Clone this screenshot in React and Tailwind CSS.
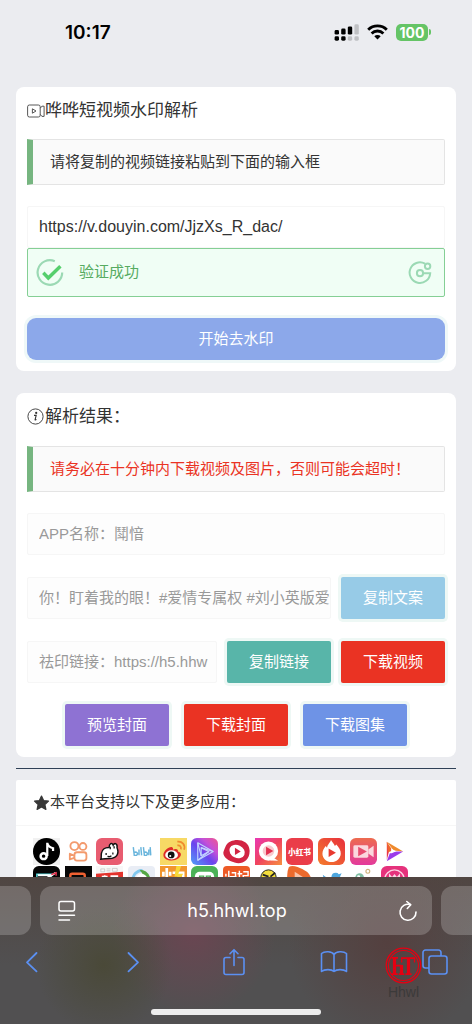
import { useState } from 'react';

const btnBase =
  'h-[42px] rounded-[2px] text-[15px] text-white whitespace-nowrap ring-[3px] ring-[#eef8f5]';

const fieldBase =
  'h-[42px] min-w-0 rounded-[2px] border border-[#f6f6f6] px-[11px] outline-none';

function StatusBar() {
  return (
    <header className="flex h-[87px] shrink-0 items-start justify-between pr-[41px] pl-[65px] pt-[20px]">
      <span className="font-['Inter','Liberation_Sans',sans-serif] text-[19px] leading-[26px] font-semibold text-black">10:17</span>
      <div className="flex h-[24px] items-center gap-[8px]">
        <svg width="25" height="17" viewBox="0 0 25 17" aria-label="Signal">
          <g fill="#000">
            <rect x="0.6" y="6" width="4.4" height="4.6" rx="1.4" />
            <rect x="7.2" y="4.6" width="4.4" height="6" rx="1.4" />
            <rect x="13.8" y="2.4" width="4.4" height="8.2" rx="1.4" />
            <rect x="0.6" y="12.3" width="4.4" height="4.4" rx="1.4" />
            <rect x="7.2" y="12.3" width="4.4" height="4.4" rx="1.4" />
          </g>
          <g fill="#bfc0c3">
            <rect x="20.4" y="0.3" width="4.4" height="10.3" rx="1.4" />
            <rect x="13.8" y="12.3" width="4.4" height="4.4" rx="1.4" />
            <rect x="20.4" y="12.3" width="4.4" height="4.4" rx="1.4" />
          </g>
        </svg>
        <svg width="21" height="16" viewBox="0 0 21 16" aria-label="Wi-Fi">
          <path d="M10.5 15.6 13.7 12.3a4.6 4.6 0 0 0-6.4 0z" fill="#000" />
          <path d="M4.6 9.4a8.4 8.4 0 0 1 11.8 0" fill="none" stroke="#000" strokeWidth="2.8" />
          <path d="M1.2 5.7a13.3 13.3 0 0 1 18.6 0" fill="none" stroke="#000" strokeWidth="2.9" />
        </svg>
        <div className="flex items-center gap-px">
          <span className="flex h-[17px] w-[32px] items-center justify-center rounded-[5px] bg-[#65c466] font-['Inter','Liberation_Sans',sans-serif] text-[14px] font-bold text-white">100</span>
          <span className="h-[6px] w-[2px] rounded-r-full bg-[#65c466]" />
        </div>
      </div>
    </header>
  );
}

function Notice({ children, danger }) {
  return (
    <p className={`flex h-[46px] items-center rounded-r-[2px] border border-l-[6px] border-[#e4e4e4] border-l-[#76b580] bg-[#fafafa] pl-[17px] text-[15px] ${danger ? 'text-[#ea3323]' : 'text-[#333333]'}`}>
      {children}
    </p>
  );
}

function ParseCard() {
  const [link, setLink] = useState('https://v.douyin.com/JjzXs_R_dac/');

  return (
    <section className="flex flex-col rounded-[8px] bg-white px-[11px] pt-[11px] pb-[11px]">
      <h1 className="mb-[16px] flex h-[25px] items-center text-[17px] text-[#333333]">
        <svg width="18" height="14" viewBox="0 0 18 14" fill="none" stroke="#444" strokeWidth="0.9" className="shrink-0">
          <rect x="0.6" y="1" width="12.6" height="12" rx="1.8" />
          <path d="M5.4 4.8v4.4L9 7z" />
          <path d="M13.3 4.2l1.6-2h2.2v10.2h-2.2l-1.6-2" />
        </svg>
        哗哗短视频水印解析
      </h1>
      <Notice>请将复制的视频链接粘贴到下面的输入框</Notice>
      <input
        aria-label="视频链接"
        value={link}
        onChange={(event) => setLink(event.target.value)}
        className={`${fieldBase} mt-[21px] text-[16px] text-[#333333]`}
      />
      <div className="flex h-[49px] items-center justify-between rounded-[2px] border border-[#85cf95] bg-[#f0fef5] pr-[12px] pl-[8px] text-[15px] text-[#56ab61]">
        <span className="flex items-center gap-[15px]">
          <svg width="28" height="28" viewBox="0 0 28 28" fill="none">
            <path d="M18.8 2.2A12.3 12.3 0 1 0 26.2 13.4" stroke="#9bd9b4" strokeWidth="2.2" />
            <path d="M7.3 13.8l5 5.2L24.4 7.2" stroke="#56cf6d" strokeWidth="3.4" />
          </svg>
          验证成功
        </span>
        <svg width="24" height="24" viewBox="0 0 24 24" fill="none" stroke="#9bd9b4" strokeWidth="2">
          <path d="M17 2.7A10.3 10.3 0 1 0 22.2 12.2H15" />
          <circle cx="12" cy="12.2" r="3.1" />
          <circle cx="19.6" cy="5.2" r="2.7" />
        </svg>
      </div>
      <button type="button" className="mt-[21px] h-[42px] rounded-[9px] bg-[#8ca8ea] text-[15px] text-white ring-[3px] ring-[#eff8f8]">
        开始去水印
      </button>
    </section>
  );
}

function ResultCard() {
  const mutedField = `${fieldBase} bg-[#fdfdfd] pb-[4px] text-[15px] text-[#999999]`;

  return (
    <section className="mt-[22px] flex flex-col rounded-[8px] bg-white px-[11px] pt-[11px] pb-[11px]">
      <h2 className="mb-[17px] flex h-[25px] items-center gap-px text-[17px] text-[#333333]">
        <svg width="17" height="17" viewBox="0 0 17 17" className="shrink-0">
          <circle cx="8.5" cy="8.5" r="7.6" fill="none" stroke="#333" strokeWidth="0.9" />
          <circle cx="9.2" cy="4.9" r="1.1" fill="#333" />
          <path d="M7 7.4h2.2l-1.1 4.3c-.1.5.5.3 1.3-.3" fill="none" stroke="#333" strokeWidth="1.1" />
        </svg>
        解析结果：
      </h2>
      <Notice danger>请务必在十分钟内下载视频及图片，否则可能会超时！</Notice>
      <input aria-label="APP名称" readOnly value="APP名称：鬦愔" className={`${mutedField} mt-[21px]`} />
      <div className="mt-[22px] flex gap-[10px]">
        <input aria-label="文案" readOnly value="你！盯着我的眼！#爱情专属权 #刘小英版爱情专属权" className={`${mutedField} flex-1 pr-0`} />
        <button type="button" className={`${btnBase} w-[104px] bg-[#97cbe7]`}>复制文案</button>
      </div>
      <div className="mt-[22px] flex gap-[10px]">
        <input aria-label="祛印链接" readOnly value="祛印链接：https://h5.hhw" className={`${mutedField} flex-1 pr-0`} />
        <button type="button" className={`${btnBase} w-[104px] bg-[#58b5a9]`}>复制链接</button>
        <button type="button" className={`${btnBase} w-[104px] bg-[#ea3323]`}>下载视频</button>
      </div>
      <div className="mt-[21px] flex justify-center gap-[15px]">
        <button type="button" className={`${btnBase} w-[104px] bg-[#8e72d3]`}>预览封面</button>
        <button type="button" className={`${btnBase} w-[104px] bg-[#ea3323]`}>下载封面</button>
        <button type="button" className={`${btnBase} w-[104px] bg-[#6e93e6]`}>下载图集</button>
      </div>
    </section>
  );
}

// Each entry is drawn on a 28x28 canvas.
const APP_ICONS = [
  {
    name: '抖音',
    art: (
      <>
        <rect width="28" height="28" fill="#f1f1f1" />
        <circle cx="14" cy="14" r="14" fill="#000" />
        <circle cx="11" cy="18.8" r="3.1" fill="none" stroke="#fff" strokeWidth="2.6" />
        <path d="M14.8 18.6V5c.6 4 3 4.8 6 5.6v3" fill="none" stroke="#fff" strokeWidth="2.3" />
      </>
    ),
  },
  {
    name: '快手',
    art: (
      <g fill="none" stroke="#f39a6d" strokeWidth="1.9">
        <circle cx="9.8" cy="8.4" r="4.2" />
        <circle cx="18.6" cy="8.8" r="3.6" />
        <rect x="9.8" y="14.8" width="12.4" height="8.6" rx="2.6" />
        <path d="M9.6 18.2l-4.6-1.8v5.8l4.6-1.6" strokeLinejoin="round" />
      </g>
    ),
  },
  {
    name: '皮皮虾',
    art: (
      <>
        <rect width="28" height="28" rx="6" fill="#e85c70" />
        <path d="M5 22c.8-2 .2-3 .6-6 .6-4 4-6.4 8-6.2 0-4 3-5.6 4.2-2.4 1.4-3 4.8-1.6 4 2.8 2.6 6-.4 11-7.8 11-3 0-6 .8-9 .8z" fill="#fff" stroke="#111" strokeWidth="1.5" />
        <path d="M14.8 9v2.6M18.8 8.6V11M10.5 15.6v2M17.5 15v2M12 18.6q2 1.6 4-.2" stroke="#111" strokeWidth="1.3" fill="none" />
      </>
    ),
  },
  {
    name: '哔哩哔哩',
    art: (
      <g fill="none" stroke="#69b5dc" strokeWidth="1.5">
        <path d="M5.5 9.5l1 8.5h2.5q2-2.2-.6-3.4l-2 .2M11.4 12v6M13.3 9.5l.8 8.5M16 9.5l1 8.5h2.3q1.9-2.2-.6-3.4l-2 .2M21.6 12v6M23 9.5l.6 8.5" />
      </g>
    ),
  },
  {
    name: '微博',
    art: (
      <>
        <rect width="28" height="28" fill="#f7d965" />
        <path d="M3.5 17.5c0-4 6-9 9-8 1.5.5 1 2 .8 2.6 3-1.4 6.2-.8 5.2 2 4.5 1 4 4.8.5 7.2-5 3.6-15.5 2.2-15.5-3.8z" fill="#df2c28" />
        <ellipse cx="12" cy="17.5" rx="6.6" ry="4.7" fill="#fff" />
        <circle cx="11.6" cy="17.6" r="3.5" fill="#111" />
        <circle cx="10.6" cy="18.6" r="1.1" fill="#fff" />
        <path d="M18 7.6c2.6-.4 4.4 1.6 3.6 4.2M18 3.8c5-.8 8.6 3.4 7 8.4" fill="none" stroke="#f08c2e" strokeWidth="1.8" />
      </>
    ),
  },
  {
    name: '微视',
    art: (
      <>
        <defs>
          <linearGradient id="weishi" x1="0" y1="1" x2="1" y2="0">
            <stop offset="0" stopColor="#4fa0f7" />
            <stop offset="0.45" stopColor="#6a45ee" />
            <stop offset="0.7" stopColor="#c450d8" />
            <stop offset="1" stopColor="#f0578d" />
          </linearGradient>
        </defs>
        <rect width="28" height="28" rx="6" fill="url(#weishi)" />
        <g fill="none" stroke="#c3d4ff" strokeWidth="1.2" strokeLinejoin="round">
          <path d="M7 5v18L23 14z" />
          <path d="M10.5 10v8.5L18.5 14z" />
          <path d="M7 5l3.5 13.5M23 14l-12.5-4M7 23l11.5-9" />
        </g>
      </>
    ),
  },
  {
    name: '全民小视频',
    art: (
      <>
        <path d="M3 8C7-.5 27-1 27.6 13c.4 11-9 15-15.6 12.4C5 24-1 19 .6 14c.6-2 1.4-4 2.4-6z" fill="#d22443" />
        <ellipse cx="14.6" cy="14" rx="8.3" ry="6.5" fill="#fff" transform="rotate(25 14.6 14)" />
        <path d="M12.4 10v7.6l6-3.6z" fill="#d22443" />
      </>
    ),
  },
  {
    name: '全民K歌',
    art: (
      <>
        <defs>
          <linearGradient id="quanmin" x1="0" y1="0" x2="1" y2="1">
            <stop offset="0" stopColor="#e938b4" />
            <stop offset="0.5" stopColor="#f0435f" />
            <stop offset="1" stopColor="#f6903f" />
          </linearGradient>
        </defs>
        <rect width="28" height="28" fill="url(#quanmin)" />
        <circle cx="14" cy="13.5" r="10" fill="#fff" />
        <path d="M17 19l7 4.5-8-.2z" fill="#fff" />
        <circle cx="14" cy="13.5" r="6" fill="#f9c9cf" />
        <path d="M11.5 9v9l7.5-4.5z" fill="#e23050" />
      </>
    ),
  },
  {
    name: '小红书',
    art: (
      <>
        <rect width="28" height="28" rx="6" fill="#ea3d49" />
        <text x="14" y="17.5" textAnchor="middle" fontSize="8" fontWeight="900" fill="#fff">小红书</text>
      </>
    ),
  },
  {
    name: '火山',
    art: (
      <>
        <defs>
          <linearGradient id="huoshan" x1="0" y1="1" x2="1" y2="0">
            <stop offset="0" stopColor="#f47c2c" />
            <stop offset="1" stopColor="#e82f3d" />
          </linearGradient>
        </defs>
        <rect width="28" height="28" rx="6" fill="url(#huoshan)" />
        <path d="M13.5 2c1 2.5 3.4 3.6 4 6.4l1.5-1.6c2.8 3 4.8 6 4.6 9.6-.3 5-4.5 8.6-9.6 8.6S4.7 21.5 4.6 16.4c0-3.4 1.6-5.4 3.4-8l1.4 1.8C9.6 6.6 12.6 5 13.5 2z" fill="#fff" />
        <path d="M11 11v8.6l7.6-4.3z" fill="#e8392f" />
      </>
    ),
  },
  {
    name: '美拍',
    art: (
      <>
        <defs>
          <linearGradient id="meipai" x1="0" y1="0" x2="0" y2="1">
            <stop offset="0" stopColor="#ed6b4f" />
            <stop offset="1" stopColor="#e33a9c" />
          </linearGradient>
        </defs>
        <rect width="28" height="28" rx="6" fill="url(#meipai)" />
        <rect x="3.5" y="7.5" width="15.5" height="13" rx="1.5" fill="#fbd8de" />
        <path d="M19 12l5.5-4v12L19 16z" fill="#fbd8de" />
        <path d="M8.5 9v10l9-5z" fill="#e84c6e" />
      </>
    ),
  },
  {
    name: '西瓜视频',
    art: (
      <>
        <path d="M6 4l17 10-10-1z" fill="#ef8a2c" />
        <path d="M6 4l2.5 9L6 23z" fill="#e8304e" />
        <path d="M6 4l6 9-5 2z" fill="#ef642d" />
        <path d="M23 14L6 24l3-8 7-2z" fill="#9b3bea" />
        <path d="M10.5 11v5l4.5-2.5z" fill="#fff" />
      </>
    ),
  },
  {
    name: '剪映',
    art: (
      <>
        <rect width="28" height="28" rx="6" fill="#050505" />
        <path d="M4 8.5h15v13H4z" fill="none" stroke="#58dcdf" strokeWidth="1.5" />
        <path d="M5 9.5h14.5l4-2.5-18 11" fill="none" stroke="#fff" strokeWidth="2" />
        <path d="M19 9l5-2v3" fill="none" stroke="#e5304c" strokeWidth="1.5" />
      </>
    ),
  },
  {
    name: '快影',
    art: (
      <>
        <rect width="28" height="28" fill="#080808" />
        <rect x="5.5" y="8" width="15" height="14" rx="2" fill="none" stroke="#ef6132" strokeWidth="2.5" />
      </>
    ),
  },
  {
    name: '今日头条',
    art: (
      <>
        <rect width="28" height="28" fill="#f7f7f7" />
        <path d="M0 8l28-2v22H0z" fill="#e2332d" />
        <path d="M5 3h4v3H5zM11 3h4M11 5h4M17 2.5h5v3h-5z" fill="none" stroke="#c4c4c4" strokeWidth="0.8" />
        <path d="M6 11h6M9 9.5v4M15 10.5h8" stroke="#fff" strokeWidth="1.8" />
      </>
    ),
  },
  {
    name: '好看视频',
    art: (
      <>
        <rect width="28" height="28" rx="4" fill="#e9edf5" />
        <path d="M5 15A10 10 0 0 1 15 4.5" fill="none" stroke="#82c8ee" strokeWidth="3" />
        <path d="M12 4q10 0 12 12l-5-1q-3-6-7-11z" fill="#55a744" />
        <circle cx="14" cy="14" r="6" fill="#fff" />
        <path d="M5 15l3 8" stroke="#f3cc49" strokeWidth="3" />
      </>
    ),
  },
  {
    name: '快看点',
    art: (
      <>
        <rect width="28" height="28" fill="#f2962e" />
        <path d="M7 2v24M3.5 6v5M10.5 6v4M13 7h11v6M11 13h15" fill="none" stroke="#fff" strokeWidth="2.8" />
        <path d="M17 0h5l-3 8h5l-8 14 2-11h-3z" fill="#f8d838" />
      </>
    ),
  },
  {
    name: '绿洲',
    art: (
      <>
        <rect width="28" height="28" rx="6" fill="#4bb257" />
        <rect x="4" y="6" width="20" height="16" rx="5" fill="#fff" />
        <path d="M9 10.5h4v3H9zM16 10.5h4v3h-4z" fill="none" stroke="#4bb257" strokeWidth="1.5" />
      </>
    ),
  },
  {
    name: '快报',
    art: (
      <>
        <rect width="28" height="28" rx="4" fill="#ed5a26" />
        <path d="M6 5v14M3 8v3M9 7h4v4M7 11h7M17 5v14M15 8h5M21 6h5v4h-5v9" fill="none" stroke="#fff" strokeWidth="1.5" />
      </>
    ),
  },
  {
    name: '最右',
    art: (
      <>
        <circle cx="14" cy="12" r="8" fill="#f2dc3c" stroke="#222" strokeWidth="1" />
        <path d="M8 9l6 2M21 7l-5 4M11 13h8" stroke="#222" strokeWidth="1.8" />
      </>
    ),
  },
  {
    name: '梨视频',
    art: (
      <>
        <path d="M3 1q3-2 9 0 14 5 14 13 0 4-22 10Q-1 10 3 1z" fill="#ec6a2d" />
        <path d="M9 6v12l11-5z" fill="#fff" opacity="0.6" />
      </>
    ),
  },
  {
    name: 'Twitter',
    art: (
      <path d="M5 9q4 4 9 3.5-.5-5.5 4.5-5.5 2 0 3 1.5l3-1-1.5 3q.5 11-10 12.5-5 .5-8-2 4 .5 6-1.5-4-1-4.5-3.5z" fill="#4da6de" />
    ),
  },
  {
    name: '逗拍',
    art: (
      <>
        <circle cx="10" cy="12" r="4.5" fill="#7dbda2" />
        <circle cx="9" cy="11" r="1.5" fill="#fff" />
        <circle cx="18.5" cy="5.5" r="2" fill="none" stroke="#cdb27c" strokeWidth="1.2" />
      </>
    ),
  },
  {
    name: '美图',
    art: (
      <>
        <rect width="28" height="28" rx="6" fill="#e5327c" />
        <circle cx="14" cy="14" r="10" fill="none" stroke="#fbd5e4" strokeWidth="1.5" />
        <path d="M9 16V9.5l2.5 3 2.5-3 2.5 3 2.5-3V16" fill="none" stroke="#fbd5e4" strokeWidth="1.5" />
      </>
    ),
  },
];

function SupportedApps() {
  return (
    <section className="mt-[11px] rounded-[2px] bg-white">
      <h2 className="flex h-[46px] items-center border-b border-[#f6f6f6] pl-[17px] text-[15px] text-[#333333]">
        <svg width="17" height="16" viewBox="0 0 17 16" className="shrink-0">
          <path d="M8.5 1l2.1 4.5 4.9.6-3.6 3.4 1 4.9-4.4-2.4-4.4 2.4 1-4.9L1.5 6.1l4.9-.6z" fill="#383838" stroke="#383838" strokeWidth="1.2" strokeLinejoin="round" />
        </svg>
        本平台支持以下及更多应用：
      </h2>
      <ul className="grid grid-cols-12 gap-y-px pt-[12px] pr-[43px] pl-[17px]">
        {APP_ICONS.map((app) => (
          <li key={app.name}>
            <svg width="27" height="27" viewBox="0 0 28 28" role="img" aria-label={app.name}>{app.art}</svg>
          </li>
        ))}
      </ul>
    </section>
  );
}

function HhwlBadge() {
  return (
    <div className="absolute top-[70px] right-[50px] flex flex-col items-center">
      <svg width="37" height="37" viewBox="0 0 37 37">
        <g fill="none" stroke="#e60012">
          <circle cx="18.5" cy="18.5" r="17.3" strokeWidth="1.3" />
          <circle cx="18.5" cy="18.5" r="15" strokeWidth="1.1" />
          <path d="M9.500 10.500v17M16.500 18v9.500M23.500 11v16.500" strokeWidth="3.200" />
          <path d="M6.500 10.800h6.500M6.500 27.200h6.200M13.700 27.200h5.600M20.500 27.200h6M9.500 18.700h7M16 11.200h14" strokeWidth="1.800" />
          <path d="M16.700 11v4.500M29.500 11v4.500" strokeWidth="1.300" />
        </g>
      </svg>
      <span className="text-[14px] leading-[17px] text-[#3b3a3a]">Hhwl</span>
    </div>
  );
}

function BrowserBar() {
  return (
    <footer className="relative h-[147px] shrink-0 overflow-hidden bg-[#515051] bg-[radial-gradient(circle_at_22%_60%,#4a4938_0%,transparent_18%),radial-gradient(circle_at_41%_38%,#6a4652_0%,transparent_28%),radial-gradient(circle_at_82%_45%,#54403f_0%,transparent_25%),linear-gradient(#504642,#515051_60%)]">
      <div className="flex gap-[9px] pt-[9px]">
        <span className="h-[49px] w-[31px] shrink-0 rounded-r-[12px] bg-white/20" />
        <div className="flex h-[49px] flex-1 items-center justify-between rounded-[12px] bg-white/20 pr-[14px] pl-[17px] text-white">
          <button type="button" aria-label="页面菜单">
            <svg width="19" height="22" viewBox="0 0 19 22" fill="none" stroke="#fff" strokeWidth="1.5" strokeLinecap="round">
              <rect x="2" y="1.5" width="15.5" height="9.5" rx="2" />
              <path d="M2 15.3h15.5M2 20h10.5" />
            </svg>
          </button>
          <span className="font-['Inter','Liberation_Sans',sans-serif] text-[18px] leading-[24px]">h5.hhwl.top</span>
          <button type="button" aria-label="刷新">
            <svg width="20" height="22" viewBox="0 0 20 22" fill="none" stroke="#fff" strokeWidth="1.6" strokeLinecap="round" strokeLinejoin="round">
              <path d="M12.3 4.6A8 8 0 1 0 18 12" />
              <path d="M8.8 1.5l4 3.3-3.5 3.7" />
            </svg>
          </button>
        </div>
        <span className="h-[49px] w-[31px] shrink-0 rounded-l-[12px] bg-white/20" />
      </div>
      <nav className="flex h-[54px] items-center justify-between pr-[23px] pl-[18px]">
        <button type="button" aria-label="后退" className="flex w-[28px] justify-center">
          <svg width="20" height="24" viewBox="0 0 20 24" fill="none" stroke="#5b90f2" strokeWidth="1.8" strokeLinecap="round" strokeLinejoin="round"><path d="M14.5 3L5 12.3l9.5 9" /></svg>
        </button>
        <button type="button" aria-label="前进" className="flex w-[28px] justify-center">
          <svg width="20" height="24" viewBox="0 0 20 24" fill="none" stroke="#5b90f2" strokeWidth="1.8" strokeLinecap="round" strokeLinejoin="round"><path d="M5.5 3l9.5 9.3-9.5 9" /></svg>
        </button>
        <button type="button" aria-label="分享" className="flex w-[28px] justify-center">
          <svg width="22" height="28" viewBox="0 0 22 28" fill="none" stroke="#5b90f2" strokeWidth="1.6" strokeLinecap="round" strokeLinejoin="round">
            <path d="M7 9.5H3a2 2 0 0 0-2 2v13a2 2 0 0 0 2 2h16a2 2 0 0 0 2-2v-13a2 2 0 0 0-2-2h-4" />
            <path d="M11 17.5V2M7 5.7L11 1.7l4 4" />
          </svg>
        </button>
        <button type="button" aria-label="书签" className="flex w-[28px] justify-center">
          <svg width="28" height="24" viewBox="0 0 28 24" fill="none" stroke="#5b90f2" strokeWidth="1.6" strokeLinecap="round" strokeLinejoin="round">
            <path d="M14 21.5V4.5C12 1.2 4.5 1 1.5 3.5v18c3-2.5 10-2.5 12.5 0 2.5-2.5 9.5-2.5 12.5 0v-18C23.5 1 16 1.2 14 4.5" />
          </svg>
        </button>
        <button type="button" aria-label="标签页" className="flex w-[28px] justify-center">
          <svg width="26" height="26" viewBox="0 0 26 26" fill="none" stroke="#5b90f2" strokeWidth="1.6" strokeLinejoin="round">
            <rect x="7" y="7" width="18" height="18" rx="2.5" />
            <path d="M7 19H3.5A2.5 2.5 0 0 1 1 16.5v-13A2.5 2.5 0 0 1 3.5 1h13A2.5 2.5 0 0 1 19 3.5V7" />
          </svg>
        </button>
      </nav>
      <div className="mx-auto mt-[20px] h-[6px] w-[170px] rounded-full bg-[#ededed]" />
      <HhwlBadge />
    </footer>
  );
}

export default function App() {
  return (
    <div className="flex h-screen flex-col overflow-hidden bg-[#ebecf0] font-['Liberation_Sans','Noto_Sans_CJK_SC',sans-serif]">
      <StatusBar />
      <main className="min-h-0 flex-1 overflow-hidden px-[16px]">
        <ParseCard />
        <ResultCard />
        <hr className="mt-[11px] border-t border-[#2f4056]" />
        <SupportedApps />
      </main>
      <BrowserBar />
    </div>
  );
}
